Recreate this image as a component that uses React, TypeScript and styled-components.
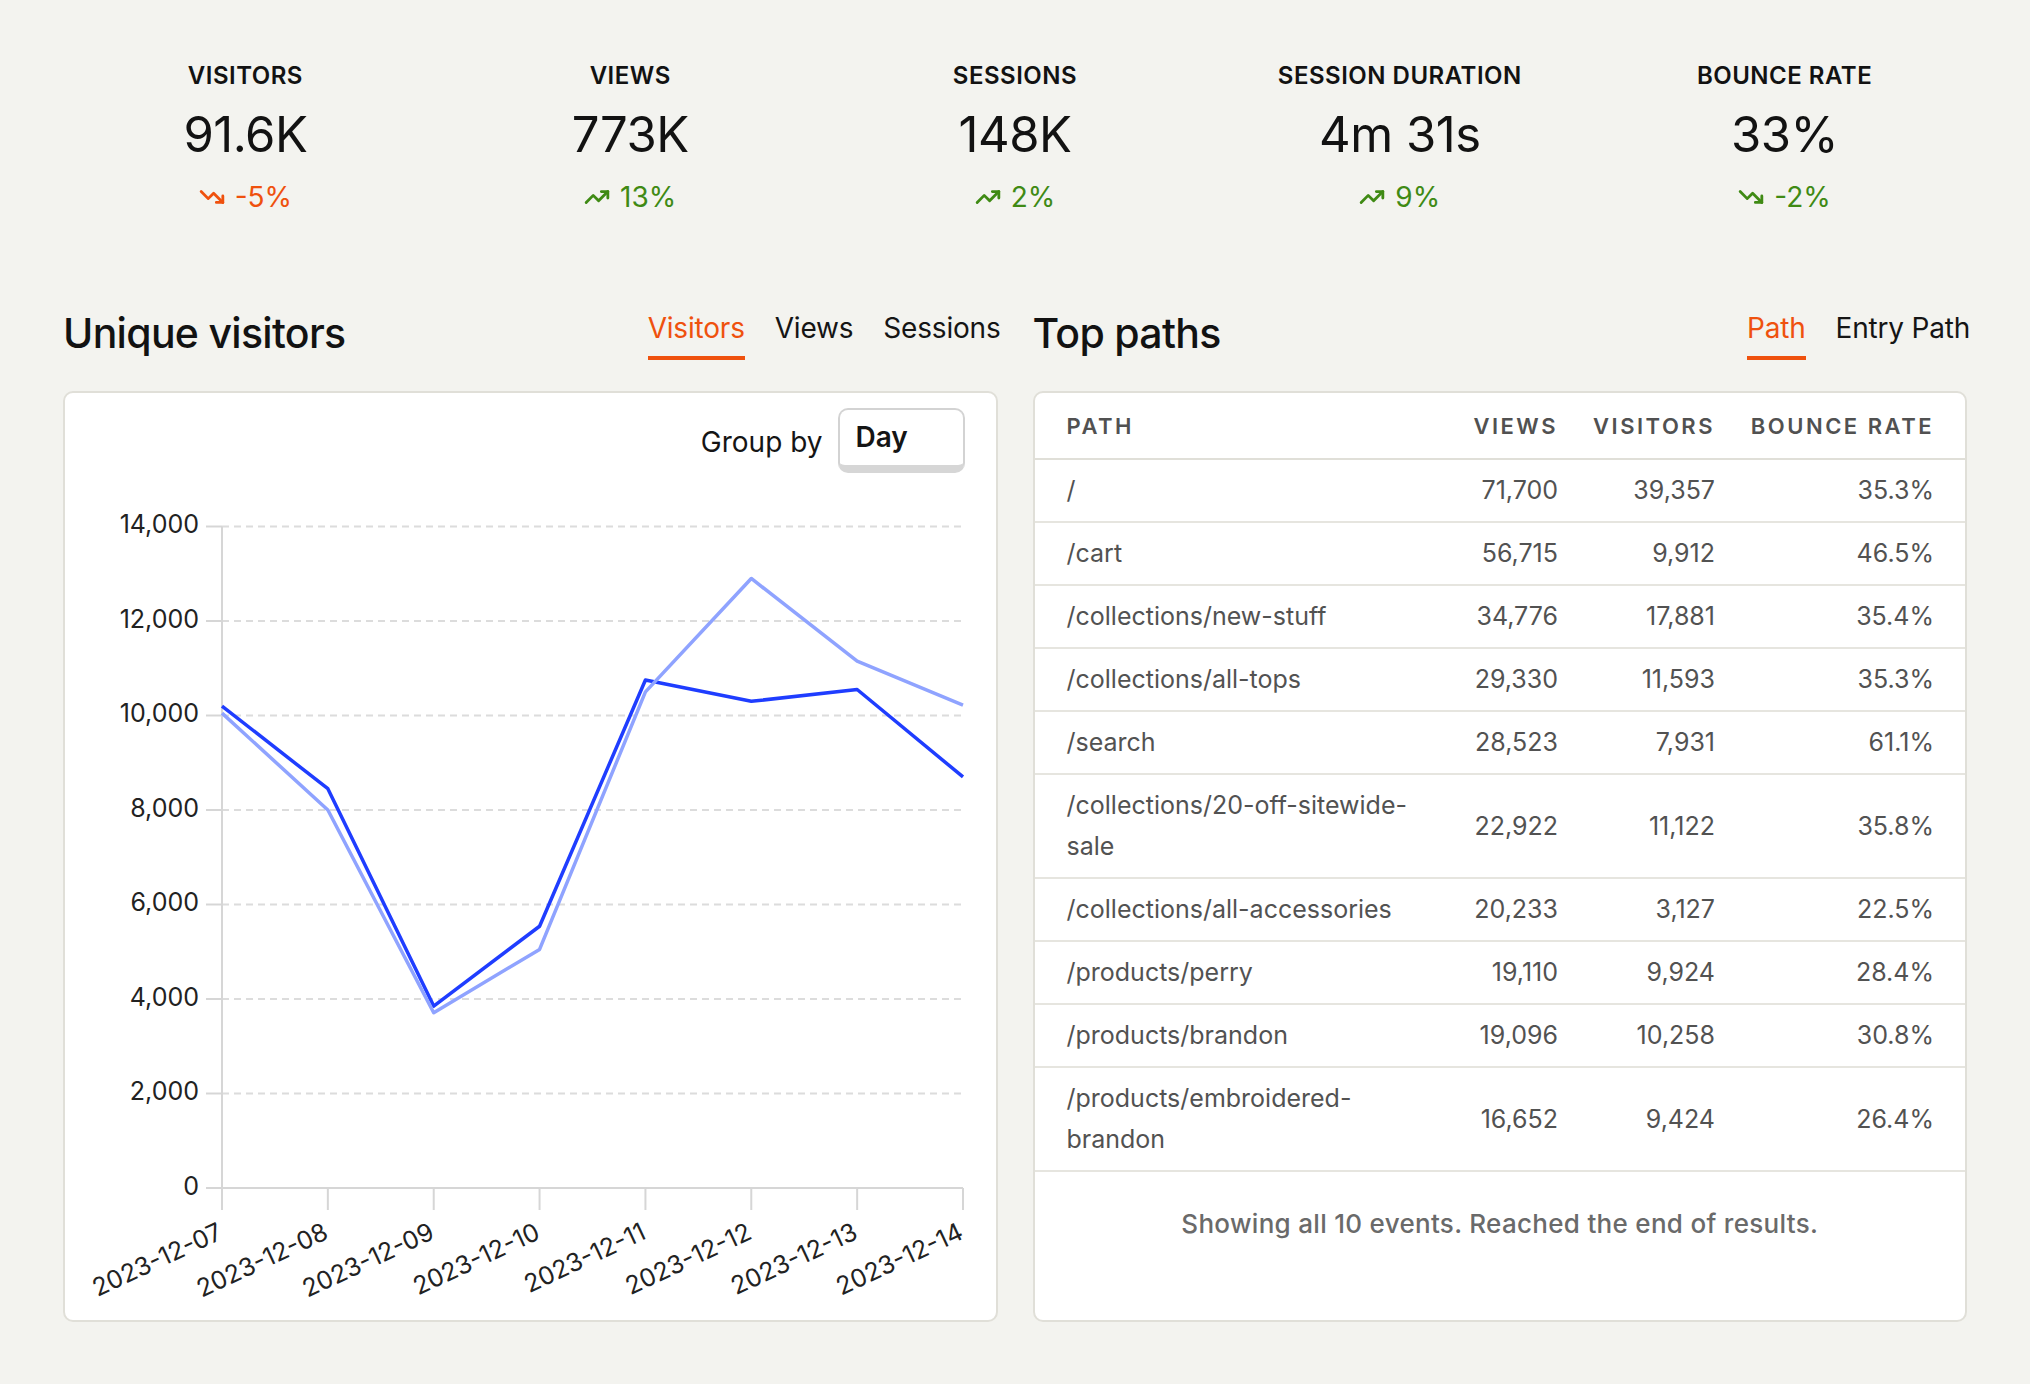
import React from "react"
import styled, { createGlobalStyle } from "styled-components"
import { TrendingDown, TrendingUp } from "lucide-react"

const GlobalStyle = createGlobalStyle`
  * { box-sizing: border-box; }
  body {
    margin: 0;
    background: #f3f3ef;
    font-family: Inter, "Noto Sans", "Liberation Sans", sans-serif;
    color: #141414;
  }
`

type Tone = "good" | "bad"

const stats: { label: string; value: string; change: string; dir: "up" | "down"; tone: Tone }[] = [
  { label: "VISITORS", value: "91.6K", change: "-5%", dir: "down", tone: "bad" },
  { label: "VIEWS", value: "773K", change: "13%", dir: "up", tone: "good" },
  { label: "SESSIONS", value: "148K", change: "2%", dir: "up", tone: "good" },
  { label: "SESSION DURATION", value: "4m 31s", change: "9%", dir: "up", tone: "good" },
  { label: "BOUNCE RATE", value: "33%", change: "-2%", dir: "down", tone: "good" },
]

const paths = [
  ["/", "71,700", "39,357", "35.3%"],
  ["/cart", "56,715", "9,912", "46.5%"],
  ["/collections/new-stuff", "34,776", "17,881", "35.4%"],
  ["/collections/all-tops", "29,330", "11,593", "35.3%"],
  ["/search", "28,523", "7,931", "61.1%"],
  ["/collections/20-off-sitewide-sale", "22,922", "11,122", "35.8%"],
  ["/collections/all-accessories", "20,233", "3,127", "22.5%"],
  ["/products/perry", "19,110", "9,924", "28.4%"],
  ["/products/brandon", "19,096", "10,258", "30.8%"],
  ["/products/embroidered-brandon", "16,652", "9,424", "26.4%"],
]

const dates = ["2023-12-07", "2023-12-08", "2023-12-09", "2023-12-10", "2023-12-11", "2023-12-12", "2023-12-13", "2023-12-14"]
const visitors = [10200, 8450, 3850, 5540, 10750, 10300, 10550, 8700]
const previous = [10050, 8000, 3710, 5050, 10500, 12900, 11150, 10220]

const Page = styled.div`
  padding: 61px 63px 0;
  min-height: 100vh;
`

const StatsGrid = styled.div`
  display: grid;
  grid-template-columns: repeat(5, minmax(0, 1fr));
  gap: 20px;
`

const Stat = styled.div`
  display: flex;
  flex-direction: column;
  align-items: center;
`

const StatLabel = styled.div`
  font-size: 24px;
  line-height: 29px;
  font-weight: 600;
  letter-spacing: 0.5px;
  color: #121212;
`

const StatValue = styled.div`
  margin-top: 15px;
  font-size: 49px;
  line-height: 60px;
  font-weight: 400;
  letter-spacing: -0.5px;
  color: #121212;
`

const StatChange = styled.div<{ $tone: Tone }>`
  margin-top: 15px;
  display: flex;
  align-items: center;
  gap: 10px;
  font-size: 28px;
  line-height: 34px;
  color: ${(p) => (p.$tone === "bad" ? "#ef510e" : "#3f8a14")};
`

const Sections = styled.div`
  margin-top: 94px;
  display: grid;
  grid-template-columns: minmax(0, 1fr) minmax(0, 1fr);
  gap: 35px;
`

const Section = styled.section`
  display: flex;
  flex-direction: column;
`

const SectionHead = styled.div`
  display: flex;
  justify-content: space-between;
  align-items: flex-start;
  height: 52px;
  margin-bottom: 31px;
`

const Title = styled.h2`
  margin: 0;
  font-size: 41px;
  line-height: 50px;
  font-weight: 500;
  letter-spacing: -0.7px;
  color: #121212;
`

const Tabs = styled.div`
  display: flex;
  gap: 30px;
  margin-top: 3px;
  margin-right: -3px;
`

const Tab = styled.div<{ $active?: boolean }>`
  font-size: 28px;
  line-height: 34px;
  letter-spacing: -0.2px;
  padding-bottom: 11px;
  border-bottom: 4px solid ${(p) => (p.$active ? "#ef510e" : "transparent")};
  color: ${(p) => (p.$active ? "#ef510e" : "#151515")};
`

const Panel = styled.div`
  flex: 1;
  display: flex;
  flex-direction: column;
  background: #ffffff;
  border: 2px solid #e0dfd8;
  border-radius: 10px;
  overflow: hidden;
`

const ChartHead = styled.div`
  display: flex;
  justify-content: flex-end;
  align-items: center;
  gap: 15px;
  padding: 15px 31px 0;
`

const GroupLabel = styled.span`
  font-size: 28px;
  line-height: 34px;
  color: #151515;
  margin-top: 3px;
`

const Select = styled.div`
  width: 127px;
  padding: 10px 16px 11px;
  border: 2px solid #d3d3d3;
  border-bottom: 8px solid #d6d6d6;
  border-radius: 10px;
  font-size: 28px;
  line-height: 34px;
  font-weight: 600;
  color: #151515;
  background: #fff;
`

const TableGrid = styled.div`
  display: grid;
  grid-template-columns: minmax(0, 1fr) 86px 121px 183px;
  column-gap: 36px;
  padding: 0 31px 0 32px;
  align-items: center;
`

const HeadRow = styled(TableGrid)`
  height: 67px;
  border-bottom: 2px solid #e0dfd8;
`

const Row = styled(TableGrid)`
  padding-top: 10px;
  padding-bottom: 10px;
  border-bottom: 2px solid #e6e5df;
`

const HeadCell = styled.div<{ $right?: boolean }>`
  font-size: 22px;
  font-weight: 600;
  letter-spacing: 2.5px;
  color: #515151;
  white-space: nowrap;
  text-align: ${(p) => (p.$right ? "right" : "left")};
  direction: ${(p) => (p.$right ? "rtl" : "ltr")};
`

const Cell = styled.div<{ $right?: boolean }>`
  font-size: 25px;
  line-height: 41px;
  color: #525252;
  text-align: ${(p) => (p.$right ? "right" : "left")};
`

const Footer = styled.div`
  padding-top: 31px;
  text-align: center;
  font-size: 26px;
  line-height: 41px;
  font-weight: 500;
  letter-spacing: 0.3px;
  color: #6a6a6a;
`

const AX = 157
const RX = 898
const Y0 = 715
const yFor = (v: number) => Y0 - (v / 2000) * 94.5
const xFor = (i: number) => AX + (i * (RX - AX)) / 7
const pointsOf = (data: number[]) => data.map((v, i) => `${xFor(i)},${yFor(v)}`).join(" ")

function Chart() {
  const ticks = [0, 2000, 4000, 6000, 8000, 10000, 12000, 14000]
  return (
    <svg width={930} height={847} viewBox="0 0 930 847" style={{ display: "block" }}>
      <g fontFamily="Inter, 'Noto Sans', sans-serif" fontSize={25} fill="#222">
        {ticks.map((t) => (
          <g key={t}>
            {t > 0 && (
              <line x1={AX} x2={RX} y1={yFor(t)} y2={yFor(t)} stroke="#dcdcdc" strokeWidth={2} strokeDasharray="7 5" />
            )}
            <line x1={141} x2={AX} y1={yFor(t)} y2={yFor(t)} stroke="#d6d6d6" strokeWidth={2} />
            <text x={134} y={yFor(t)} textAnchor="end" dominantBaseline="middle">
              {t.toLocaleString("en-US")}
            </text>
          </g>
        ))}
        <line x1={AX} x2={AX} y1={yFor(14000)} y2={Y0} stroke="#d6d6d6" strokeWidth={2} />
        <line x1={AX} x2={RX} y1={Y0} y2={Y0} stroke="#d6d6d6" strokeWidth={2} />
        {dates.map((d, i) => (
          <g key={d}>
            <line x1={xFor(i)} x2={xFor(i)} y1={Y0} y2={Y0 + 22} stroke="#d6d6d6" strokeWidth={2} />
            <text
              x={xFor(i) + 2}
              y={Y0 + 50}
              textAnchor="end"
              transform={`rotate(-25 ${xFor(i) + 2} ${Y0 + 50})`}
            >
              {d}
            </text>
          </g>
        ))}
      </g>
      <polyline points={pointsOf(visitors)} fill="none" stroke="#1f3dff" strokeWidth={3.5} strokeLinejoin="round" />
      <polyline points={pointsOf(previous)} fill="none" stroke="#8fa3ff" strokeWidth={3.5} strokeLinejoin="round" />
    </svg>
  )
}

export default function App() {
  return (
    <Page>
      <GlobalStyle />
      <StatsGrid>
        {stats.map((s) => (
          <Stat key={s.label}>
            <StatLabel>{s.label}</StatLabel>
            <StatValue>{s.value}</StatValue>
            <StatChange $tone={s.tone}>
              {s.dir === "up" ? <TrendingUp size={26} strokeWidth={2.6} /> : <TrendingDown size={26} strokeWidth={2.6} />}
              <span>{s.change}</span>
            </StatChange>
          </Stat>
        ))}
      </StatsGrid>

      <Sections>
        <Section>
          <SectionHead>
            <Title>Unique visitors</Title>
            <Tabs>
              <Tab $active>Visitors</Tab>
              <Tab>Views</Tab>
              <Tab>Sessions</Tab>
            </Tabs>
          </SectionHead>
          <Panel>
            <ChartHead>
              <GroupLabel>Group by</GroupLabel>
              <Select>Day</Select>
            </ChartHead>
            <Chart />
          </Panel>
        </Section>

        <Section>
          <SectionHead>
            <Title>Top paths</Title>
            <Tabs>
              <Tab $active>Path</Tab>
              <Tab>Entry Path</Tab>
            </Tabs>
          </SectionHead>
          <Panel>
            <HeadRow>
              <HeadCell>PATH</HeadCell>
              <HeadCell $right>VIEWS</HeadCell>
              <HeadCell $right>VISITORS</HeadCell>
              <HeadCell $right>BOUNCE RATE</HeadCell>
            </HeadRow>
            {paths.map(([path, views, vis, bounce]) => (
              <Row key={path}>
                <Cell>{path}</Cell>
                <Cell $right>{views}</Cell>
                <Cell $right>{vis}</Cell>
                <Cell $right>{bounce}</Cell>
              </Row>
            ))}
            <Footer>Showing all 10 events. Reached the end of results.</Footer>
          </Panel>
        </Section>
      </Sections>
    </Page>
  )
}
